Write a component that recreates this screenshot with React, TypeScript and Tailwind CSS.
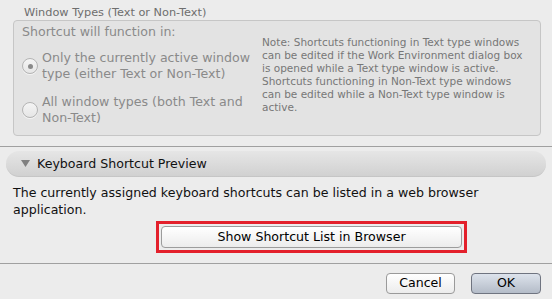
import React from "react";

function Radio({ checked }: { checked?: boolean }) {
  return (
    <div className="w-[16px] h-[16px] rounded-full border border-[#b4b4b4] bg-gradient-to-b from-[#f4f4f4] to-[#e6e6e6] flex items-center justify-center shrink-0 shadow-[0_1px_0_rgba(255,255,255,0.6)]">
      {checked && <div className="w-[5px] h-[5px] rounded-full bg-[#8a8a8a]" />}
    </div>
  );
}

export default function App() {
  return (
    <div
      className="w-[552px] h-[299px] bg-[#ececec] overflow-hidden flex flex-col text-[12.6px] text-black"
      style={{ fontFamily: '"DejaVu Sans", sans-serif' }}
    >
      {/* Window Types group */}
      <div className="pl-[13px] pr-[11px] pt-[5px]">
        <div className="pl-[11px] text-[11.3px] leading-[15px] text-[#6e6e6e]">
          Window Types (Text or Non-Text)
        </div>
        <div className="h-[116px] border border-[#c6c6c6] rounded-[4px] bg-[#e3e3e3] flex">
          <div className="w-[246px] pl-[8px] pt-[3px] text-[#8a8a8a]">
            <div className="leading-[16px]">Shortcut will function in:</div>
            <div className="flex items-center gap-[4px] mt-[10px]">
              <Radio checked />
              <div className="leading-[16px]">
                Only the currently active window
                <br />
                type (either Text or Non-Text)
              </div>
            </div>
            <div className="flex items-center gap-[4px] mt-[12px]">
              <Radio />
              <div className="leading-[16px]">
                All window types (both Text and
                <br />
                Non-Text)
              </div>
            </div>
          </div>
          <div className="pl-[2px] pt-[15px] text-[10.5px] leading-[13px] text-[#777777] w-[272px]">
            Note: Shortcuts functioning in Text type windows can be edited if the Work Environment dialog box is opened while a Text type window is active. Shortcuts functioning in Non-Text type windows can be edited while a Non-Text type window is active.
          </div>
        </div>
      </div>

      {/* separator */}
      <div className="mt-[10px] h-px bg-[#a0a0a0]" />

      {/* Disclosure bar */}
      <div className="mx-[6px] mt-[4px] h-[26px] rounded-full bg-gradient-to-b from-[#e6e6e6] to-[#d0d0d0] flex items-center pl-[15px] shadow-[inset_0_-1px_0_rgba(0,0,0,0.05)]">
        <svg width="9" height="8" viewBox="0 0 9 8" className="mr-[7px]">
          <path d="M0 0 L9 0 L4.5 7 Z" fill="#808080" />
        </svg>
        <span className="text-[#111]">Keyboard Shortcut Preview</span>
      </div>

      {/* Body */}
      <div className="px-[13px] pt-[7px] leading-[17px] text-[#111]">
        The currently assigned keyboard shortcuts can be listed in a web browser application.
      </div>

      <div className="flex mt-[3px] pl-[156px]">
        <div className="border-[3px] border-[#e3202b] p-[2px] w-[311px]">
          <div className="h-[22px] rounded-[4px] border border-[#9c9c9c] bg-gradient-to-b from-[#ffffff] to-[#ececec] flex items-center justify-center">
            Show Shortcut List in Browser
          </div>
        </div>
      </div>

      <div className="mt-[10px] h-px bg-[#a0a0a0]" />

      <div className="flex justify-end gap-[16px] pr-[11px] pt-[9px]">
        <div className="w-[69px] h-[21px] rounded-[4px] border border-[#9a9a9a] bg-gradient-to-b from-[#ffffff] to-[#ececec] flex items-center justify-center">
          Cancel
        </div>
        <div className="w-[70px] h-[21px] rounded-[4px] border border-[#6f7480] bg-gradient-to-b from-[#dde3ec] to-[#b4bcc8] flex items-center justify-center">
          OK
        </div>
      </div>
    </div>
  );
}
